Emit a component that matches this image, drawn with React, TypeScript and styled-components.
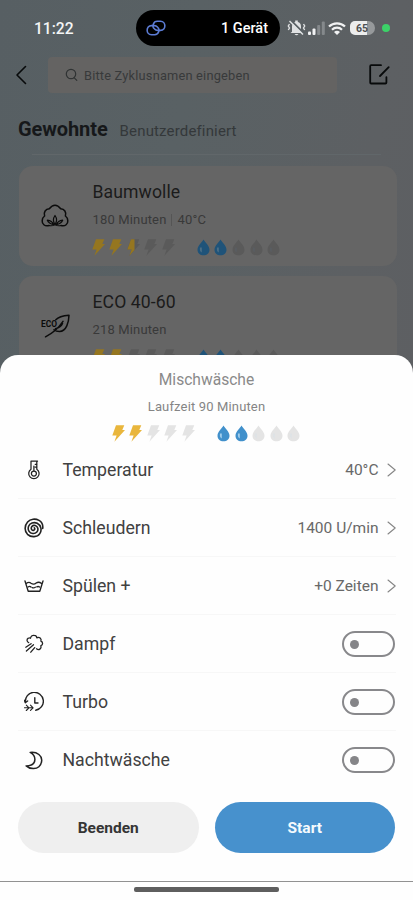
import React from "react";
import styled, { createGlobalStyle } from "styled-components";

const GlobalStyle = createGlobalStyle`
  * { box-sizing: border-box; }
  body { margin: 0; font-family: Roboto, "Noto Sans", sans-serif; }
  svg { display: block; flex: none; }
`;

const Screen = styled.div`
  position: relative;
  width: 413px;
  height: 900px;
  overflow: hidden;
  background: linear-gradient(100deg, #575f63 0%, #596164 35%, #5d6063 70%, #5d5e61 100%);
`;

const StatusBar = styled.header`
  display: flex;
  align-items: center;
  height: 57px;
  padding: 0 20px 1px 34px;
`;

const Clock = styled.span`
  width: 102px;
  padding-top: 1px;
  font-size: 15.6px;
  font-weight: 500;
  color: #f4f5f6;
`;

const Island = styled.div`
  display: flex;
  align-items: center;
  justify-content: space-between;
  width: 144px;
  height: 36px;
  padding: 0 12px 0 10px;
  border-radius: 18px;
  background: #000;
  color: #fff;
  font-size: 14.5px;
  font-weight: 500;
`;

const StatusIcons = styled.div`
  display: flex;
  align-items: center;
  margin-left: 7px;
`;

const Signal = styled.div`
  margin: 0 2px 0 1px;
`;

const Battery = styled.div`
  display: flex;
  align-items: center;
  width: 25px;
  height: 14px;
  margin: 0 7px 0 4px;
  padding-left: 6px;
  border-radius: 5px 7px 7px 5px;
  background: linear-gradient(90deg, #eceded 0 17px, #96999b 17px);
  color: #4c5053;
  font-size: 10.5px;
  font-weight: 700;
`;

const ActiveDot = styled.i`
  width: 8px;
  height: 8px;
  border-radius: 50%;
  background: #3cd268;
`;

const SearchRow = styled.div`
  display: flex;
  align-items: center;
  height: 36px;
  padding-left: 15px;
`;

const SearchField = styled.div`
  display: flex;
  align-items: center;
  gap: 6px;
  width: 289px;
  height: 36px;
  margin: 0 32px 0 18px;
  padding-left: 17px;
  border-radius: 4px;
  background: #646362;
  color: #383a3b;
  font-size: 12.8px;
  letter-spacing: 0.2px;
`;

const Tabs = styled.nav`
  display: flex;
  align-items: baseline;
  height: 61px;
  margin: 0 33px 0 18px;
  padding-top: 24px;
`;

const Tab = styled.span<{ $active?: boolean }>`
  margin-right: 12px;
  font-size: ${(p) => (p.$active ? "20px" : "15px")};
  line-height: 24px;
  font-weight: ${(p) => (p.$active ? 700 : 400)};
  color: ${(p) => (p.$active ? "#16181a" : "#34383a")};
  letter-spacing: ${(p) => (p.$active ? "-0.1px" : "0.15px")};
`;

const TabLine = styled.div`
  height: 1px;
  margin: 0 32px 11px;
  background: #61676a;
`;

const Card = styled.article`
  display: flex;
  width: 378px;
  height: 100px;
  margin: 0 0 10px 19px;
  border-radius: 14px;
  background: #656565;
`;

const CardIcon = styled.div`
  display: flex;
  align-items: center;
  width: 73.5px;
  padding: 0 0 1px 22px;
`;

const CardBody = styled.div`
  padding-top: 15px;
`;

const CardTitle = styled.h2`
  margin: 0;
  font-size: 17.6px;
  line-height: 23px;
  font-weight: 400;
  color: #1b1b1b;
  letter-spacing: 0.1px;
`;

const CardMeta = styled.div`
  display: flex;
  align-items: center;
  gap: 5px;
  margin: 7px 0 10px;
  font-size: 13px;
  line-height: 18px;
  letter-spacing: 0.15px;
  color: #393939;
`;

const MetaDivider = styled.i`
  width: 1px;
  height: 12px;
  background: #555;
`;

const Ratings = styled.div`
  display: flex;
  gap: 22px;
  margin-left: -1px;
`;

const RatingGroup = styled.div`
  display: flex;
  gap: 4.6px;
`;

const Sheet = styled.section`
  position: absolute;
  inset: 355px 0 0;
  display: flex;
  flex-direction: column;
  align-items: center;
  border-radius: 18px 18px 0 0;
  background: #fefefe;
`;

const SheetTitle = styled.h1`
  margin: 14px 0 0;
  font-size: 15.6px;
  line-height: 22px;
  font-weight: 400;
  color: #8a8a8a;
`;

const Runtime = styled.p`
  margin: 7px 0 9px;
  font-size: 13px;
  line-height: 18px;
  letter-spacing: 0.15px;
  color: #858585;
`;

const Options = styled.div`
  width: 378px;
  margin-top: -1px;
`;

const OptionRow = styled.div`
  display: grid;
  grid-template-columns: 44px 1fr auto;
  align-items: center;
  height: 58px;
  padding: 1px 0 0 1px;
  border-bottom: 1px solid #f7f7f7;
  &:last-child { border-color: transparent; }
`;

const OptionIcon = styled.div`
  display: flex;
  justify-content: center;
  width: 30px;
`;

const OptionLabel = styled.span`
  font-size: 17.7px;
  color: #414141;
`;

const OptionValue = styled.span`
  display: flex;
  align-items: center;
  gap: 8px;
  font-size: 15.5px;
  color: #686868;
`;

const Toggle = styled.div`
  display: flex;
  align-items: center;
  width: 53px;
  height: 26px;
  margin-right: 1px;
  padding-left: 6px;
  border: 2px solid #88888b;
  border-radius: 13px;
  &::before {
    content: "";
    width: 9px;
    height: 9px;
    border-radius: 50%;
    background: #858588;
  }
`;

const Actions = styled.div`
  display: flex;
  gap: 16px;
  width: 377px;
  margin-top: 13px;
`;

const ActionButton = styled.button<{ $primary?: boolean }>`
  flex: 1;
  height: 51px;
  padding: 0;
  border: 0;
  border-radius: 26px;
  background: ${(p) => (p.$primary ? "#4791cd" : "#efefef")};
  color: ${(p) => (p.$primary ? "#f5fafd" : "#353535")};
  font: 700 15.5px Roboto, sans-serif;
`;

const NavArea = styled.footer`
  display: flex;
  justify-content: center;
  width: 100%;
  margin-top: 28px;
  padding-top: 5px;
  border-top: 1px solid #929292;
`;

const HomeHandle = styled.div`
  width: 145px;
  height: 5px;
  border-radius: 2px;
  background: #5e5e5e;
`;

const Stroke = ({ w, h, sw = 1.3, color = "#222", children }: {
  w: number; h: number; sw?: number; color?: string; children: React.ReactNode;
}) => (
  <svg width={w} height={h} viewBox={`0 0 ${w} ${h}`} fill="none" stroke={color}
    strokeWidth={sw} strokeLinecap="round" strokeLinejoin="round">{children}</svg>
);

type Palette = { bolt: string; drop: string; off: string; shine: string };
const bright: Palette = { bolt: "#e9b63c", drop: "#4190cb", off: "#e4e4e4", shine: "#b9dcf2" };
const dimmed: Palette = { bolt: "#957620", drop: "#1f5379", off: "#5a5a5a", shine: "#56758a" };

function Bolt({ fill, p }: { fill: number; p: Palette }) {
  return (
    <svg width="13" height="17" viewBox="0 0 13 17">
      <path d="M4 .3H12.3L10.3 4.9H13L2.4 16.8L4.6 10.4H.3Z" fill={fill === 1 ? p.bolt : p.off} />
      {fill === 0.5 && <path d="M4 .3H7.5V11.1L2.4 16.8L4.6 10.4H.3Z" fill={p.bolt} />}
    </svg>
  );
}

function Drop({ on, p }: { on: boolean; p: Palette }) {
  return (
    <svg width="13" height="17" viewBox="0 0 13 17">
      <path d="M6.5 .5C7.7 3.2 12.5 6.3 12.5 10.7C12.5 14 10 16.3 6.5 16.3S.5 14 .5 10.7C.5 6.3 5.3 3.2 6.5 .5Z" fill={on ? p.drop : p.off} />
      <path d="M3 8.5C2.5 11 3.2 12.8 4.8 13.6V8.4Z" fill={p.shine} opacity={on ? 0.8 : 0.15} />
    </svg>
  );
}

function RatingBar({ energy, water, palette }: { energy: number; water: number; palette: Palette }) {
  return (
    <Ratings>
      <RatingGroup>
        {[0, 1, 2, 3, 4].map((i) => <Bolt key={i} fill={Math.max(0, Math.min(1, energy - i))} p={palette} />)}
      </RatingGroup>
      <RatingGroup>
        {[0, 1, 2, 3, 4].map((i) => <Drop key={i} on={i < water} p={palette} />)}
      </RatingGroup>
    </Ratings>
  );
}

const CottonIcon = () => (
  <Stroke w={28} h={24} sw={1.5} color="#0b0b0b">
    <path d="M8 21.5C3.5 22.5 1 20 1.2 16.8C1.2 14.5 2.2 13 3.6 12C2.4 8 4.6 5 8.3 4.8C10 2.5 12 1.2 14 1.2S18 2.5 19.7 4.8C23.4 5 25.6 8 24.4 12C25.8 13 26.8 14.5 26.8 16.8C27 20 24.5 22.5 20 21.5" />
    <path d="M14 20.5C11.6 17 12.2 14 14 11.5C15.8 14 16.4 17 14 20.5M12.7 20.7C9.5 20 7.3 18.5 6.3 16.2C9 16.5 11.5 17.7 12.7 20.7M15.3 20.7C18.5 20 20.7 18.5 21.7 16.2C19 16.5 16.5 17.7 15.3 20.7M8 21.5Q11 22.2 14 20.8Q17 22.2 20 21.5" strokeWidth="1.2" />
  </Stroke>
);

const EcoIcon = () => (
  <Stroke w={30} h={24} sw={1.5} color="#0b0b0b">
    <text x="0" y="12.7" fill="#0b0b0b" stroke="none" fontSize="9" fontWeight="700" textLength="16" lengthAdjust="spacingAndGlyphs">ECO</text>
    <path d="M14.8 5.8C18 2.2 22 1.7 28 1.3C27.8 8 25.5 17.5 18.5 17.5C16.3 17.5 14.5 17 13 15.7M4.5 22.8C10.5 19.7 17.5 14 22 7.3M14.5 14.8C18 13.8 20.5 11.8 21.5 9.5" />
  </Stroke>
);

const Chevron = () => (
  <Stroke w={9} h={14} sw={1.1} color="#858585"><path d="M1 1L8.2 7L1 13" /></Stroke>
);

const ThermometerIcon = () => (
  <Stroke w={14} h={20} sw={1.25}>
    <path d="M4 9.2V1.2H10.5M9.8 1.2V9.2M10 4.3H8.2M10 7H8.2M4 9.2A5.2 5.2 0 1 0 9.8 9.2M6.9 6V10.7" />
    <circle cx="6.9" cy="13.5" r="2.5" />
  </Stroke>
);

const SpiralIcon = () => (
  <Stroke w={20} h={20} sw={1.6}>
    <path d="M18.7 10.5C19.2 7 17.8 4 15 2.4C11.5 .4 6.5 .7 3.6 4C.4 7.6 .3 13 3.5 16.3C7.2 19.8 13.4 19.3 15.8 15.6C18.2 12.2 17 7.2 13.2 5.3C9.8 3.6 5.7 5.2 4.6 8.2C3.3 11.8 5.4 15.3 8.8 15.5C12.2 15.9 14.5 13 13.8 10.2C13.1 7.4 9.5 6.5 7.9 8.5C6.5 10.3 7.7 12.7 9.4 12.4C10.8 12.1 11.2 10.8 10.3 9.8" />
  </Stroke>
);

const BasinIcon = () => (
  <Stroke w={20} h={14} sw={1.35}>
    <path d="M1 2L4.2 12.2H15.8L19 2M2.2 4.6C4.4 2.8 5.3 2.8 7 4.2C9 5.6 10.5 5.5 12.2 4C14 2.7 15.5 2.8 17.5 4.5" />
    <path d="M4 8C5.5 7 6.2 7.2 7 8M8.3 8.6Q9.8 9.3 11.3 8.2M12.8 7.8Q14.2 7 15.6 8" />
  </Stroke>
);

const SteamIcon = () => (
  <Stroke w={20} h={20} sw={1.3}>
    <path d="M4.7 8.6C2.7 7.8 2.4 5.2 4.3 4.2C5.2 3.7 6 3.8 6.5 4.2C7 2 8.6 1 10.3 1.4C12 1.6 12.8 2.8 12.8 3.8C15.4 2.5 17.8 4.5 16.9 7.2C19.2 8 19.1 11.2 16.9 11.7C17.8 14.8 14.8 16.7 12.5 14.8" />
    <path d="M7.1 9.7L1.8 13.2M9.5 10.8L2.4 17M10.7 13.6L6.8 18.2" />
  </Stroke>
);

const TurboIcon = () => (
  <Stroke w={20} h={20} sw={1.4}>
    <path d="M1.4 10.2A9 9 0 1 1 11.7 18.2M.3 8.2L1.3 10.8L3.6 9M10.8 5.8V11H14" />
    <path d="M.5 15.8H8.7M2.3 13.1L5 15.8L2.3 18.5M6.5 13.2L9.1 15.8L6.5 18.4" strokeWidth="1.1" />
  </Stroke>
);

const MoonIcon = () => (
  <Stroke w={18} h={19} sw={1.5}>
    <path d="M5.2 1.4C12.8 .6 17 5 16.7 9.6C16.3 15 12.5 17.8 8.2 17.6C5.2 17.5 3 16.7 1.2 14.9C6.3 14.8 9.9 12.7 9.9 8.4C9.9 5.3 7.8 2.8 5.2 1.4Z" />
  </Stroke>
);

const options: { label: string; icon: React.ReactNode; value?: string }[] = [
  { label: "Temperatur", icon: <ThermometerIcon />, value: "40°C" },
  { label: "Schleudern", icon: <SpiralIcon />, value: "1400 U/min" },
  { label: "Spülen +", icon: <BasinIcon />, value: "+0 Zeiten" },
  { label: "Dampf", icon: <SteamIcon /> },
  { label: "Turbo", icon: <TurboIcon /> },
  { label: "Nachtwäsche", icon: <MoonIcon /> },
];

export default function App() {
  return (
    <Screen>
      <GlobalStyle />
      <StatusBar>
        <Clock>11:22</Clock>
        <Island>
          <Stroke w={20} h={16} sw={1.6} color="#5c7cd4">
            <path d="M8.6 9C5.5 6.5 7.3 1.3 11.3 1.3H14.5C20.3 1.3 20.3 10.4 14.5 10.4H11.5Q9.8 10.4 8.6 9" />
            <path d="M11.4 7C14.5 9.5 12.7 14.7 8.7 14.7H5.5C-.3 14.7-.3 5.6 5.5 5.6H8.5Q10.2 5.6 11.4 7" />
          </Stroke>
          <span>1 Gerät</span>
        </Island>
        <StatusIcons>
          <svg width="19" height="18" viewBox="0 0 19 18">
            <path d="M5 12.7V7.5C5 5 6.3 3.5 8.2 3V1.5H10.8V3C12.8 3.5 14 5 14 7.5V12L15.5 14H3.5ZM7.5 15H11.5Q9.5 17.5 7.5 15Z" fill="#dfe1e2" />
            <path d="M2.5 5L1.3 7L2.5 9L1.3 11M16.5 5L17.7 7L16.5 9L17.7 11" stroke="#dfe1e2" strokeWidth="1.4" fill="none" />
            <path d="M3.7 1.2L17 14.5" stroke="#596063" strokeWidth="2" />
            <path d="M2.5 2L16 15.5" stroke="#dfe1e2" strokeWidth="1.5" />
          </svg>
          <Signal>
            <svg width="19" height="15" viewBox="0 0 19 15">
              <g fill="#f1f2f3"><rect x="1" y="10.5" width="3" height="3.5" rx="1" /><rect x="5.5" y="7.5" width="3" height="6.5" rx="1" /></g>
              <g fill="#85898c"><rect x="10.2" y="4" width="3" height="10" rx="1" /><rect x="14.8" y=".5" width="3" height="13.5" rx="1" /></g>
            </svg>
          </Signal>
          <svg width="18" height="15" viewBox="1 0 18 15" fill="none" stroke="#f1f2f3" strokeWidth="2.2">
            <path d="M2 5.5C6.3 1.2 13.7 1.2 18 5.5M5 8.8C7.8 6 12.2 6 15 8.8" />
            <path d="M7 11Q10 8.7 13 11L10 14Z" fill="#f1f2f3" stroke="none" />
          </svg>
          <Battery>65</Battery>
          <ActiveDot />
        </StatusIcons>
      </StatusBar>
      <SearchRow>
        <Stroke w={15} h={20} sw={1.6} color="#080a0b"><path d="M10.5 1.5L2 10L10.5 18.5" /></Stroke>
        <SearchField>
          <Stroke w={13} h={14} sw={1.2} color="#303334"><circle cx="6" cy="6" r="4.7" /><path d="M9.3 9.8L11.8 12.4" /></Stroke>
          Bitte Zyklusnamen eingeben
        </SearchField>
        <Stroke w={22} h={22} sw={1.8} color="#080a0b">
          <path d="M12 1.2H2.2Q1.2 1.2 1.2 2.2V18.5Q1.2 19.5 2.2 19.5H16.4Q17.4 19.5 17.4 18.5V13.2M11 12L19.7 3.2" />
        </Stroke>
      </SearchRow>
      <Tabs><Tab $active>Gewohnte</Tab><Tab>Benutzerdefiniert</Tab></Tabs>
      <TabLine />
      <Card>
        <CardIcon><CottonIcon /></CardIcon>
        <CardBody>
          <CardTitle>Baumwolle</CardTitle>
          <CardMeta>180 Minuten<MetaDivider />40°C</CardMeta>
          <RatingBar energy={2.5} water={2} palette={dimmed} />
        </CardBody>
      </Card>
      <Card>
        <CardIcon><EcoIcon /></CardIcon>
        <CardBody>
          <CardTitle>ECO 40-60</CardTitle>
          <CardMeta>218 Minuten</CardMeta>
          <RatingBar energy={2} water={2} palette={dimmed} />
        </CardBody>
      </Card>
      <Sheet>
        <SheetTitle>Mischwäsche</SheetTitle>
        <Runtime>Laufzeit 90 Minuten</Runtime>
        <RatingBar energy={2} water={2} palette={bright} />
        <Options>
          {options.map((o) => (
            <OptionRow key={o.label}>
              <OptionIcon>{o.icon}</OptionIcon>
              <OptionLabel>{o.label}</OptionLabel>
              {o.value ? <OptionValue>{o.value}<Chevron /></OptionValue> : <Toggle />}
            </OptionRow>
          ))}
        </Options>
        <Actions>
          <ActionButton>Beenden</ActionButton>
          <ActionButton $primary>Start</ActionButton>
        </Actions>
        <NavArea><HomeHandle /></NavArea>
      </Sheet>
    </Screen>
  );
}
